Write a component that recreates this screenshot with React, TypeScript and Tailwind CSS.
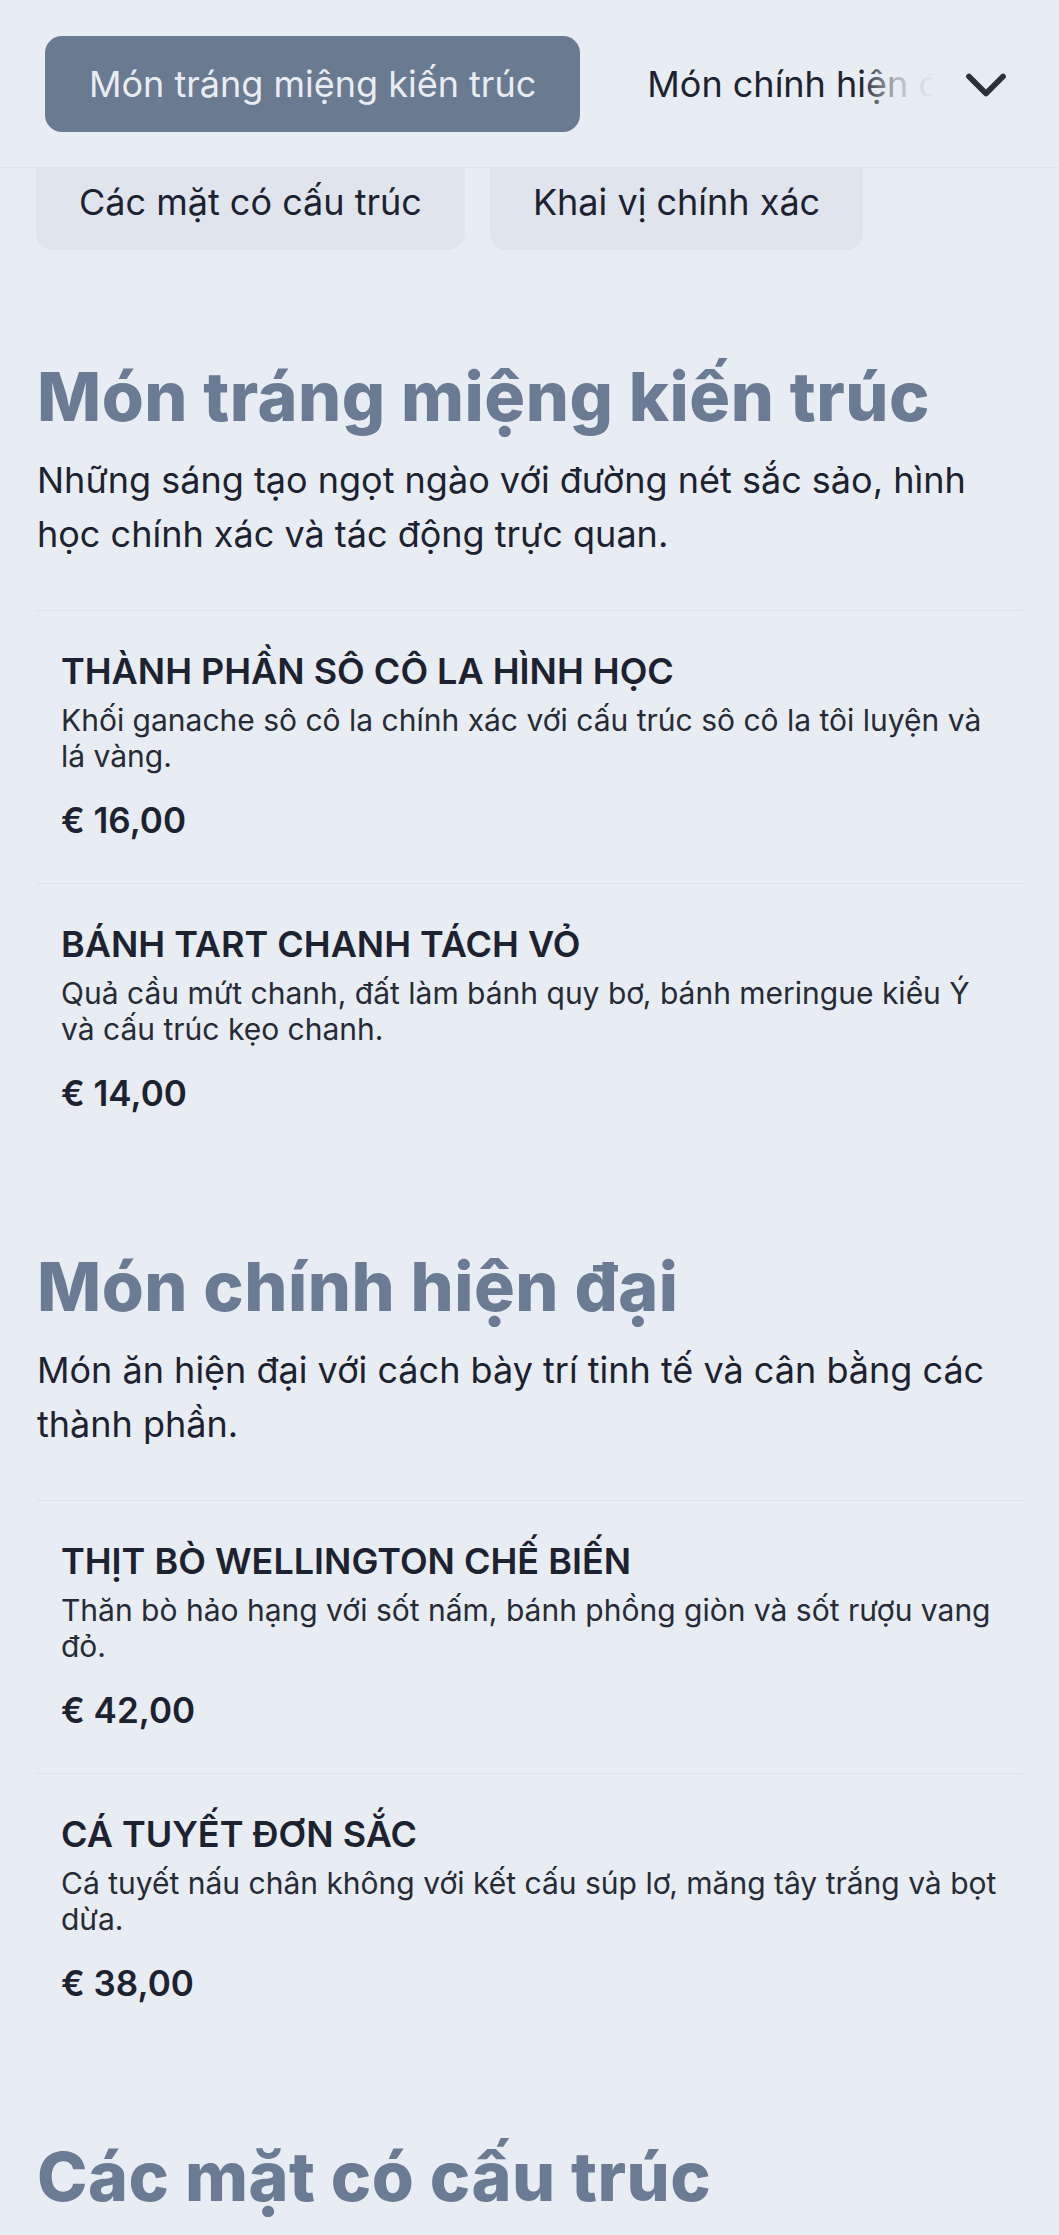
import React from "react";

type Item = { name: string; desc: string; price: string };
type Section = { title: string; desc: string; items: Item[] };

const sections: Section[] = [
  {
    title: "Món tráng miệng kiến trúc",
    desc: "Những sáng tạo ngọt ngào với đường nét sắc sảo, hình học chính xác và tác động trực quan.",
    items: [
      {
        name: "THÀNH PHẦN SÔ CÔ LA HÌNH HỌC",
        desc: "Khối ganache sô cô la chính xác với cấu trúc sô cô la tôi luyện và lá vàng.",
        price: "€ 16,00",
      },
      {
        name: "BÁNH TART CHANH TÁCH VỎ",
        desc: "Quả cầu mứt chanh, đất làm bánh quy bơ, bánh meringue kiểu Ý và cấu trúc kẹo chanh.",
        price: "€ 14,00",
      },
    ],
  },
  {
    title: "Món chính hiện đại",
    desc: "Món ăn hiện đại với cách bày trí tinh tế và cân bằng các thành phần.",
    items: [
      {
        name: "THỊT BÒ WELLINGTON CHẾ BIẾN",
        desc: "Thăn bò hảo hạng với sốt nấm, bánh phồng giòn và sốt rượu vang đỏ.",
        price: "€ 42,00",
      },
      {
        name: "CÁ TUYẾT ĐƠN SẮC",
        desc: "Cá tuyết nấu chân không với kết cấu súp lơ, măng tây trắng và bọt dừa.",
        price: "€ 38,00",
      },
    ],
  },
  {
    title: "Các mặt có cấu trúc",
    desc: "",
    items: [],
  },
];

function ChevronDown() {
  return (
    <svg
      width="68"
      height="68"
      viewBox="0 0 24 24"
      fill="none"
      stroke="#2b303b"
      strokeWidth="2"
      strokeLinecap="round"
      strokeLinejoin="round"
    >
      <path d="m6 9 6 6 6-6" />
    </svg>
  );
}

export default function App() {
  return (
    <div className="min-h-screen bg-[#e8ecf3] font-['Inter','Noto_Sans',sans-serif] text-[#1d2230]">
      <header className="relative z-10 h-[168px] bg-[#e8ecf3] border-b border-[#dfe3ea] flex items-center pl-[45px] gap-[24px] overflow-hidden">
        <button className="h-[96px] shrink-0 px-[44px] rounded-[17px] bg-[#6a7a90] text-[#e9edf3] text-[36px] leading-none whitespace-nowrap">
          Món tráng miệng kiến trúc
        </button>
        <button className="h-[96px] shrink-0 px-[43px] text-[36px] leading-none whitespace-nowrap text-[#1d2230]">
          Món chính hiện đại
        </button>
        <div className="absolute right-0 top-0 h-full w-[199px] flex items-center">
          <div className="h-full w-[75px] bg-gradient-to-r from-[#e8ecf3]/0 via-[#e8ecf3]/75 to-[#e8ecf3]"></div>
          <div className="h-full flex-1 bg-[#e8ecf3] flex items-center">
            <span className="ml-[17px] mt-[2px]">
              <ChevronDown />
            </span>
          </div>
        </div>
      </header>

      {/* Second row of tabs, partially under header */}
      <div className="-mt-[14px] flex gap-[25px] px-[36px]">
        <button className="h-[96px] px-[43px] rounded-[17px] bg-[#dfe4ed] text-[36px] leading-none whitespace-nowrap text-[#1d2230]">
          Các mặt có cấu trúc
        </button>
        <button className="h-[96px] px-[43px] rounded-[17px] bg-[#dfe4ed] text-[36px] leading-none whitespace-nowrap text-[#1d2230]">
          Khai vị chính xác
        </button>
      </div>

      <main className="px-[37px]">
        {sections.map((s, si) => (
          <section key={si} className={si === 0 ? "mt-[106px]" : "mt-[90px]"}>
            <h2 className="text-[68px] leading-[80px] font-extrabold tracking-[0.5px] text-[#6b7b93]">
              {s.title}
            </h2>
            {s.desc && (
              <p className="mt-[17px] text-[36px] leading-[54px] text-[#1d2230]">{s.desc}</p>
            )}
            {s.items.length > 0 && (
              <div className="mt-[49px]">
                {s.items.map((it, ii) => (
                  <div
                    key={ii}
                    className="border-t border-[#dde2ea] pt-[35px] pb-[41px] px-[24px]"
                  >
                    <h3 className="text-[36px] leading-[50px] font-semibold text-[#1d2230]">
                      {it.name}
                    </h3>
                    <p className="mt-[6px] text-[30px] leading-[36px] text-[#262b36]">{it.desc}</p>
                    <p className="mt-[24px] text-[35px] leading-[44px] font-semibold text-[#1d2230]">
                      {it.price}
                    </p>
                  </div>
                ))}
              </div>
            )}
          </section>
        ))}
      </main>
    </div>
  );
}
